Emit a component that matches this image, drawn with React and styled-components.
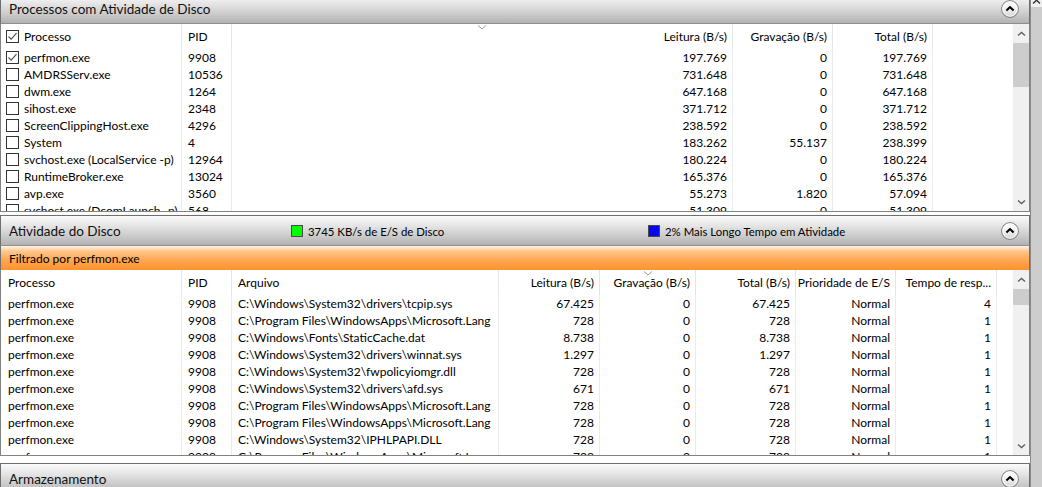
import React from 'react';
import styled, { createGlobalStyle } from 'styled-components';

const Global = createGlobalStyle`
  html, body { margin: 0; padding: 0; background: #fff; overflow: hidden; }
  body { font-family: Lato, "Noto Sans", "Liberation Sans", sans-serif; font-size: 12px; color: #000; }
  * { box-sizing: border-box; }
`;

const Page = styled.div`
  display: flex;
  width: 1042px;
  height: 487px;
  overflow: hidden;
`;

const Main = styled.div`
  width: 1030px;
  display: flex;
  flex-direction: column;
`;

const OuterScroll = styled.div`
  width: 12px;
  border-left: 1px solid #8a8a8a;
  background: #cdcdcd;
  display: flex;
  flex-direction: column;
`;

const OuterArrow = styled.div`
  height: 7px;
  background: #f0f0f0;
  display: flex;
  justify-content: center;
  align-items: flex-start;
  overflow: hidden;
`;

const SectionHeader = styled.div`
  flex: none;
  height: 31px;
  margin-top: ${p => p.$mt || 0}px;
  border: 1px solid #6e6e6e;
  border-bottom-color: #8e8e8e;
  background: linear-gradient(#fbfbfb, #e4e4e4 35%, #c6c6c6 75%, #b2b2b2);
  display: flex;
  align-items: center;
  padding: 1px 10px 0 8px;
`;

const Title = styled.div`
  font-size: 13.5px;
  white-space: nowrap;
  color: #111;
  width: ${p => (p.$w ? p.$w + 'px' : 'auto')};
  flex: none;
`;

const Legend = styled.div`
  display: flex;
  align-items: center;
  gap: 5px;
  font-size: 11.4px;
  white-space: nowrap;
  width: ${p => (p.$w ? p.$w + 'px' : 'auto')};
  flex: none;
`;

const Swatch = styled.span`
  width: 12px;
  height: 12px;
  border: 1px solid #4a4a4a;
  background: ${p => p.$bg};
`;

const CollapseWrap = styled.div`
  margin-left: auto;
  width: 18px;
  height: 18px;
  display: flex;
`;

const FilterBar = styled.div`
  flex: none;
  height: 24px;
  border-left: 1px solid #6e6e6e;
  border-right: 1px solid #6e6e6e;
  background: linear-gradient(#fff4ea, #ffc68c 22%, #ffa650 60%, #ff922e);
  padding-left: 8px;
  display: flex;
  align-items: center;
  white-space: nowrap;
`;

const Panel = styled.div`
  flex: none;
  height: ${p => p.$h}px;
  border: 1px solid #828282;
  border-top: none;
  display: flex;
  background: #fff;
  overflow: hidden;
`;

const Grid = styled.div`
  width: 1012px;
  flex: none;
  display: grid;
  grid-template-columns: ${p => p.$cols};
  grid-template-rows: 25px;
  grid-auto-rows: 17px;
  align-content: start;
  overflow: hidden;
`;

const HeadCell = styled.div`
  position: relative;
  display: flex;
  align-items: center;
  justify-content: ${p => (p.$right ? 'flex-end' : 'flex-start')};
  padding: 0 ${p => (p.$right ? 5 : 0)}px 1px ${p => p.$pl ?? 6}px;
  border-right: ${p => (p.$sep ? '1px solid #e5e5e5' : 'none')};
  white-space: nowrap;
  overflow: hidden;
`;

const Cell = styled.div`
  display: flex;
  align-items: center;
  justify-content: ${p => (p.$right ? 'flex-end' : 'flex-start')};
  padding: 0 ${p => (p.$right ? 5 : 0)}px 1px ${p => p.$pl ?? 6}px;
  border-right: ${p => (p.$sep ? '1px solid #e8ecf1' : 'none')};
  white-space: nowrap;
  overflow: hidden;
`;

const SortMark = styled.svg`
  position: absolute;
  top: 1px;
  left: 50%;
  transform: translateX(-50%);
`;

const Check = styled.span`
  width: 13px;
  height: 13px;
  border: 1px solid #333;
  background: #fff;
  display: inline-flex;
  align-items: center;
  justify-content: center;
  flex: none;
  margin-right: 5px;
`;

const VScroll = styled.div`
  width: 16px;
  flex: none;
  background: #f0f0f0;
  display: flex;
  flex-direction: column;
`;

const ScrollArrow = styled.div`
  height: 19px;
  flex: none;
  display: flex;
  align-items: center;
  justify-content: center;
`;

const Thumb = styled.div`
  height: ${p => p.$h}px;
  flex: none;
  background: #cdcdcd;
`;

const Spacer = styled.div`
  flex: 1;
`;

const Chevron = ({ down, color = '#606060' }) => (
  <svg width="9" height="6" viewBox="0 0 9 6">
    <path
      d={down ? 'M1 1.5 L4.5 4.5 L8 1.5' : 'M1 4.5 L4.5 1.5 L8 4.5'}
      fill="none"
      stroke={color}
      strokeWidth="1.4"
    />
  </svg>
);

const CollapseButton = ({ id }) => (
  <CollapseWrap>
    <svg width="18" height="18" viewBox="0 0 18 18">
      <defs>
        <linearGradient id={id} x1="0" y1="0" x2="0" y2="1">
          <stop offset="0" stopColor="#ffffff" />
          <stop offset="0.6" stopColor="#ececec" />
          <stop offset="1" stopColor="#cfcfcf" />
        </linearGradient>
      </defs>
      <circle cx="9" cy="9" r="8.4" fill={`url(#${id})`} stroke="#7a7a7a" strokeWidth="1" />
      <circle cx="9" cy="9" r="7.2" fill="none" stroke="#ffffff" strokeWidth="0.8" />
      <path d="M5.4 10.6 L9 7.1 L12.6 10.6" fill="none" stroke="#000" strokeWidth="2.1" />
    </svg>
  </CollapseWrap>
);

const CheckBox = ({ checked }) => (
  <Check>
    {checked && (
      <svg width="11" height="11" viewBox="0 0 11 11">
        <path d="M1.5 5.5 L4.2 8.2 L9.5 2.2" fill="none" stroke="#555" strokeWidth="1.2" />
      </svg>
    )}
  </Check>
);

const SortArrow = () => (
  <SortMark width="9" height="5" viewBox="0 0 9 5">
    <path d="M0.5 0.5 L4.5 4 L8.5 0.5" fill="none" stroke="#9a9a9a" strokeWidth="1" />
  </SortMark>
);

const ScrollBar = ({ thumb }) => (
  <VScroll>
    <ScrollArrow>
      <Chevron />
    </ScrollArrow>
    <Thumb $h={thumb} />
    <Spacer />
    <ScrollArrow>
      <Chevron down />
    </ScrollArrow>
  </VScroll>
);

const topCols = [
  { w: 181, pl: 5, sep: true, title: 'Processo', check: true },
  { w: 50, pl: 6, sep: true, title: 'PID' },
  { w: 501, right: true, sep: true, title: 'Leitura (B/s)', sorted: true },
  { w: 100, right: true, sep: true, title: 'Gravação (B/s)' },
  { w: 100, right: true, sep: true, title: 'Total (B/s)' },
  { w: 80, sep: false, title: '' },
];

const topRows = [
  ['perfmon.exe', '9908', '197.769', '0', '197.769', true],
  ['AMDRSServ.exe', '10536', '731.648', '0', '731.648'],
  ['dwm.exe', '1264', '647.168', '0', '647.168'],
  ['sihost.exe', '2348', '371.712', '0', '371.712'],
  ['ScreenClippingHost.exe', '4296', '238.592', '0', '238.592'],
  ['System', '4', '183.262', '55.137', '238.399'],
  ['svchost.exe (LocalService -p)', '12964', '180.224', '0', '180.224'],
  ['RuntimeBroker.exe', '13024', '165.376', '0', '165.376'],
  ['avp.exe', '3560', '55.273', '1.820', '57.094'],
  ['svchost.exe (DcomLaunch -p)', '568', '51.309', '0', '51.309'],
];

const botCols = [
  { w: 181, pl: 7, sep: true, title: 'Processo' },
  { w: 50, pl: 6, sep: true, title: 'PID' },
  { w: 267, pl: 6, sep: true, title: 'Arquivo' },
  { w: 101, right: true, sep: true, title: 'Leitura (B/s)' },
  { w: 96, right: true, sep: true, title: 'Gravação (B/s)', sorted: true },
  { w: 100, right: true, sep: true, title: 'Total (B/s)' },
  { w: 100, right: true, sep: true, title: 'Prioridade de E/S' },
  { w: 101, right: true, sep: true, title: 'Tempo de resp...' },
  { w: 16, sep: false, title: '' },
];

const LANG = 'C:\\Program Files\\WindowsApps\\Microsoft.Lang';
const botRows = [
  ['C:\\Windows\\System32\\drivers\\tcpip.sys', '67.425', '0', '67.425', '4'],
  [LANG, '728', '0', '728', '1'],
  ['C:\\Windows\\Fonts\\StaticCache.dat', '8.738', '0', '8.738', '1'],
  ['C:\\Windows\\System32\\drivers\\winnat.sys', '1.297', '0', '1.297', '1'],
  ['C:\\Windows\\System32\\fwpolicyiomgr.dll', '728', '0', '728', '1'],
  ['C:\\Windows\\System32\\drivers\\afd.sys', '671', '0', '671', '1'],
  [LANG, '728', '0', '728', '1'],
  [LANG, '728', '0', '728', '1'],
  ['C:\\Windows\\System32\\IPHLPAPI.DLL', '728', '0', '728', '1'],
  [LANG, '728', '0', '728', '1'],
].map(r => ['perfmon.exe', '9908', r[0], r[1], r[2], r[3], 'Normal', r[4], '']);

const colTemplate = cols => cols.map(c => c.w + 'px').join(' ');

const HeaderRow = ({ cols, checked }) =>
  cols.map((c, i) => (
    <HeadCell key={'h' + i} $right={c.right} $pl={c.pl} $sep={c.sep}>
      {c.sorted && <SortArrow />}
      {c.check && <CheckBox checked={checked} />}
      {c.title}
    </HeadCell>
  ));

export default function App() {
  return (
    <>
      <Global />
      <Page>
        <Main>
          <SectionHeader $mt={-7}>
            <Title>Processos com Atividade de Disco</Title>
            <CollapseButton id="cb1" />
          </SectionHeader>
          <Panel $h={188}>
            <Grid $cols={colTemplate(topCols)}>
              <HeaderRow cols={topCols} checked />
              {topRows.map((r, ri) =>
                topCols.map((c, ci) => (
                  <Cell key={ri + '-' + ci} $right={c.right} $pl={c.pl} $sep={c.sep}>
                    {ci === 0 && <CheckBox checked={!!r[5]} />}
                    {ci < 5 ? r[ci] : ''}
                  </Cell>
                ))
              )}
            </Grid>
            <ScrollBar thumb={44} />
          </Panel>

          <SectionHeader $mt={3}>
            <Title $w={282}>Atividade do Disco</Title>
            <Legend $w={357}>
              <Swatch $bg="#00ff00" />
              3745 KB/s de E/S de Disco
            </Legend>
            <Legend>
              <Swatch $bg="#0808ee" />
              2% Mais Longo Tempo em Atividade
            </Legend>
            <CollapseButton id="cb2" />
          </SectionHeader>
          <FilterBar>Filtrado por perfmon.exe</FilterBar>
          <Panel $h={186}>
            <Grid $cols={colTemplate(botCols)}>
              <HeaderRow cols={botCols} />
              {botRows.map((r, ri) =>
                botCols.map((c, ci) => (
                  <Cell key={ri + '-' + ci} $right={c.right} $pl={c.pl} $sep={c.sep}>
                    {r[ci]}
                  </Cell>
                ))
              )}
            </Grid>
            <ScrollBar thumb={16} />
          </Panel>

          <SectionHeader $mt={7}>
            <Title>Armazenamento</Title>
            <CollapseButton id="cb3" />
          </SectionHeader>
        </Main>
        <OuterScroll>
          <OuterArrow>
            <svg width="9" height="5" viewBox="0 0 9 5">
              <path d="M1 3.5 L4.5 0.2 L8 3.5" fill="none" stroke="#333" strokeWidth="1.4" />
            </svg>
          </OuterArrow>
        </OuterScroll>
      </Page>
    </>
  );
}
